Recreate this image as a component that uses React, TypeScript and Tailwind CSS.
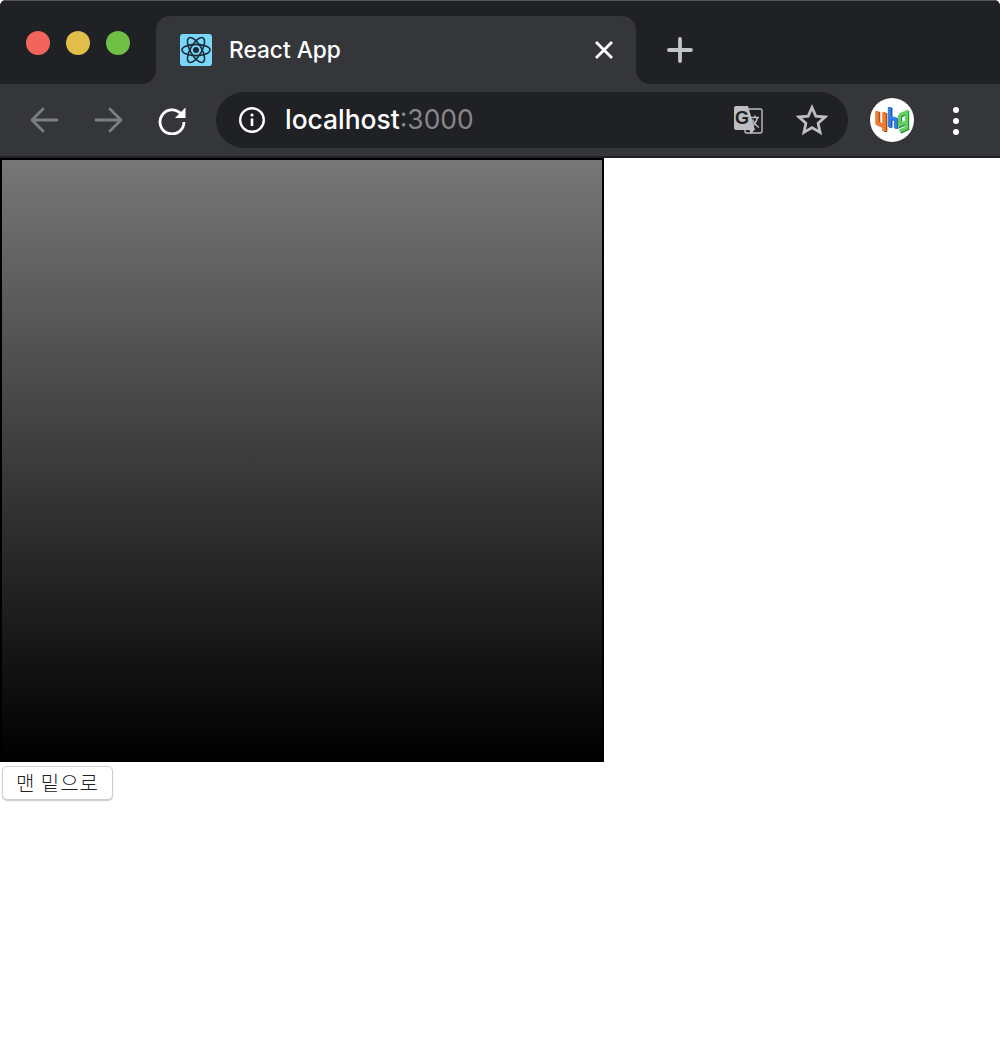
import React from 'react'

function ReactFavicon(){
  return (
    <svg width="32" height="32" viewBox="0 0 32 32" className="shrink-0">
      <rect width="32" height="32" rx="3" fill="#79d7fa" />
      <g fill="none" stroke="#1c2b36" strokeWidth="1.6">
        <ellipse cx="16" cy="16" rx="14" ry="5.6" />
        <ellipse cx="16" cy="16" rx="14" ry="5.6" transform="rotate(60 16 16)" />
        <ellipse cx="16" cy="16" rx="14" ry="5.6" transform="rotate(120 16 16)" />
      </g>
      <circle cx="16" cy="16" r="3" fill="#1c2b36" />
    </svg>
  )
}

function ToolIcon({ children }: { children: React.ReactNode }){
  return <div className="w-16 h-full flex items-center justify-center">{children}</div>
}

function TranslateIcon(){
  return (
    <svg width="32" height="32" viewBox="0 0 32 32">
      <rect x="13" y="5" width="17" height="24" rx="2" fill="#202124" stroke="#bdbec0" strokeWidth="1.4" />
      <path d="M2 4a2 2 0 0 1 2-2h12l7 24H4a2 2 0 0 1-2-2z" fill="#bdbec0" />
      <path d="M17 25l2 5 4-5z" fill="#bdbec0" />
      <text x="3" y="19.500" fontSize="18" fontWeight="700" fill="#202124" className="font-['Liberation_Sans',sans-serif]">G</text>
      <path d="M19 13.5h8M23 11.5v2M25.500 13.500c-1 4-3 7-6 9M20.500 15.500c1 3 3.500 6 6.500 8" fill="none" stroke="#bdbec0" strokeWidth="1.500" />
    </svg>
  )
}

function AvatarLogo(){
  return (
    <div className="w-11 h-11 rounded-full bg-white flex items-center justify-center shrink-0 overflow-hidden">
      <svg width="44" height="44" viewBox="0 0 44 44">
        <g fill="none" strokeLinejoin="miter">
          <path d="M7 13v12l7 3M14 14v19" stroke="#a8501c" strokeWidth="3.600" transform="translate(1.500 1)" />
          <path d="M7 13v12l7 3M14 14v19" stroke="#ee7d30" strokeWidth="3.600" />
          <path d="M19.500 9v20M19.500 19l6 2v9" stroke="#17408c" strokeWidth="3.400" transform="translate(1.200 .8)" />
          <path d="M19.500 9v20M19.500 19l6 2v9" stroke="#2f80e8" strokeWidth="3.400" />
          <path d="M29.500 17l7-3v16l-7 3M29.500 17v10l7-3" stroke="#22803a" strokeWidth="3.400" transform="translate(1 1)" />
          <path d="M29.500 17l7-3v16l-7 3M29.500 17v10l7-3" stroke="#62d15f" strokeWidth="3.400" />
        </g>
      </svg>
    </div>
  )
}

function Titlebar(){
  return (
    <div className="h-[84px] flex bg-[#35363a] rounded-t-[6px] overflow-hidden relative">
      <div className="absolute top-0 inset-x-0 h-px bg-[#55565a]" />
      <div className="w-[156px] bg-[#202124] rounded-br-[14px] flex items-start gap-4 pl-[26px] pt-[31px]">
        <span className="w-6 h-6 rounded-full bg-[#f2655c]" />
        <span className="w-6 h-6 rounded-full bg-[#e2bf4b]" />
        <span className="w-6 h-6 rounded-full bg-[#70bf47]" />
      </div>
      <div className="w-[480px] bg-[#202124] pt-4">
        <div className="h-full bg-[#35363a] rounded-t-[14px] flex items-center pl-6 pr-[22px]">
          <ReactFavicon />
          <span className="ml-[17px] flex-1 text-[22.7px] font-medium text-white font-['Inter',sans-serif]">React App</span>
          <svg width="20" height="20" viewBox="0 0 20 20">
            <path d="M2 2l16 16M18 2L2 18" stroke="#fff" strokeWidth="2.800" />
          </svg>
        </div>
      </div>
      <div className="flex-1 bg-[#202124] rounded-bl-[14px] pl-[31px] pt-[37px]">
        <svg width="26" height="26" viewBox="0 0 26 26">
          <path d="M13 2v22M2 13h22" stroke="#c4c5c8" strokeWidth="3.800" strokeLinecap="round" />
        </svg>
      </div>
    </div>
  )
}

function Toolbar(){
  return (
    <div className="h-[74px] bg-[#35363a] border-b-2 border-[#202124] pl-3 flex items-start">
      <div className="h-[72px] flex">
        <ToolIcon>
          <svg width="30" height="26" viewBox="0 0 30 26">
            <path d="M28 13H3M14 2L3 13l11 11" fill="none" stroke="#7e7f82" strokeWidth="2.800" strokeLinecap="round" strokeLinejoin="round" />
          </svg>
        </ToolIcon>
        <ToolIcon>
          <svg width="30" height="26" viewBox="0 0 30 26">
            <path d="M3 13h25M17 2l11 11-11 11" fill="none" stroke="#7e7f82" strokeWidth="2.800" strokeLinecap="round" strokeLinejoin="round" />
          </svg>
        </ToolIcon>
        <ToolIcon>
          <svg width="30" height="30" viewBox="0 0 30 30">
            <path d="M24 9A12 12 0 1 0 27 17" fill="none" stroke="#fff" strokeWidth="2.800" />
            <path d="M28.500 2.500V13H18z" fill="#fff" />
          </svg>
        </ToolIcon>
      </div>
      <div className="ml-3 mt-2 w-[632px] h-14 rounded-full bg-[#202124] flex items-center pl-[23px]">
        <svg width="26" height="26" viewBox="0 0 26 26" className="shrink-0">
          <circle cx="13" cy="13" r="11.800" fill="none" stroke="#fff" strokeWidth="2.400" />
          <path d="M13 11.500v7.500" stroke="#fff" strokeWidth="2.600" />
          <circle cx="13" cy="8" r="1.600" fill="#fff" />
        </svg>
        <span className="ml-5 text-[26.4px] leading-none pb-0.5 text-white font-medium font-['Inter',sans-serif]">
          localhost<span className="text-[#86878a] font-normal">:3000</span>
        </span>
        <div className="ml-auto flex items-center pr-5 gap-[32px]">
          <TranslateIcon />
          <svg width="32" height="32" viewBox="0 0 32 32">
            <path d="M16 3.500l3.800 8.600 9.300.9-7 6.200 2 9.200-8.100-4.800-8.100 4.800 2-9.200-7-6.200 9.300-.9z" fill="none" stroke="#bdbec0" strokeWidth="2.800" strokeLinejoin="miter" />
          </svg>
        </div>
      </div>
      <div className="ml-[22px] mt-[14px]">
        <AvatarLogo />
      </div>
      <div className="ml-[39px] mt-[23px] flex flex-col gap-[5px]">
        <span className="w-[6px] h-[6px] rounded-full bg-white" />
        <span className="w-[6px] h-[6px] rounded-full bg-white" />
        <span className="w-[6px] h-[6px] rounded-full bg-white" />
      </div>
    </div>
  )
}

export default function App(){
  return (
    <div className="w-[1000px] min-h-[1052px] bg-white">
      <Titlebar />
      <Toolbar />
      <div className="w-[604px] h-[604px] border-2 border-black bg-[linear-gradient(#777777,#000000)]" />
      <button className="block mt-1 ml-[2px] w-[111px] h-[34px] bg-white border border-[#cfcfcf] rounded-[5px] shadow-[0_1px_1px_rgba(0,0,0,0.2)] text-[20px] tracking-[1px] font-light leading-none text-[#222] font-['Noto_Sans_CJK_KR',sans-serif]">
        맨 밑으로
      </button>
    </div>
  )
}
